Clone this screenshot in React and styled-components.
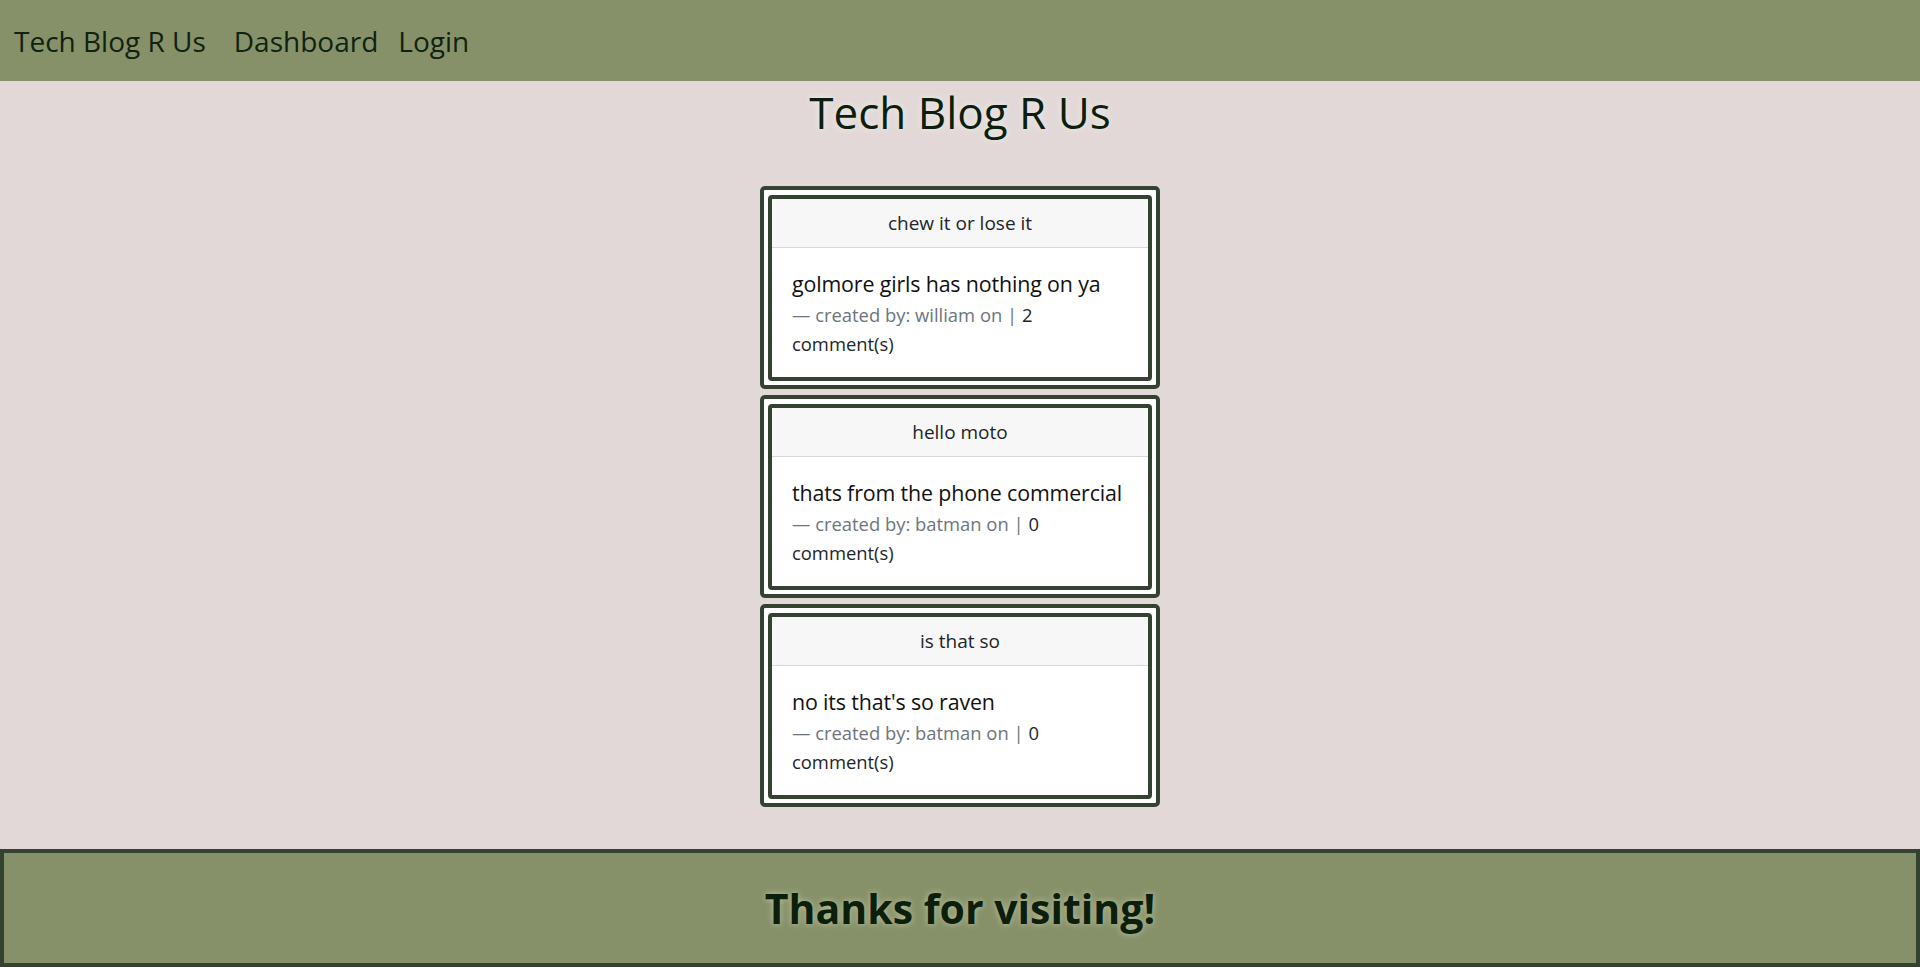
import styled, { createGlobalStyle } from "styled-components";

const GlobalStyle = createGlobalStyle`
  * { box-sizing: border-box; }
  html, body { margin: 0; padding: 0; }
  body {
    background: #e2d8d8;
    font-family: "Open Sans", "Noto Sans", sans-serif;
    color: #212529;
  }
`;

const Page = styled.div`
  min-height: 100vh;
  display: flex;
  flex-direction: column;
`;

const Nav = styled.nav`
  height: 81px;
  background: #86916a;
  display: flex;
  align-items: center;
  padding-left: 14px;
`;

const NavLink = styled.a`
  font-size: 28px;
  color: #0f2310;
  text-decoration: none;
  margin-right: ${({ $gap }) => $gap}px;
  line-height: 1;
`;

const Main = styled.main`
  flex: 1;
  display: flex;
  flex-direction: column;
  align-items: center;
`;

const Title = styled.h1`
  margin: 5px 0 48px;
  font-size: 44px;
  line-height: 52px;
  font-weight: 500;
  color: #0c1f0c;
  text-shadow: 0 0 6px rgba(255, 255, 255, 0.6);
`;

const PostList = styled.div`
  display: flex;
  flex-direction: column;
  gap: 6px;
`;

const PostFrame = styled.div`
  width: 400px;
  background: #fff;
  border: 4px solid #344331;
  border-radius: 5px;
  padding: 5px 4px 4px;
`;

const Card = styled.div`
  border: 4px solid #344331;
  border-radius: 4px;
  background: #fff;
  overflow: hidden;
`;

const CardHeader = styled.div`
  height: 49px;
  background: #f7f7f7;
  border-bottom: 1px solid rgba(0, 0, 0, 0.125);
  display: flex;
  align-items: center;
  justify-content: center;
  font-size: 19px;
  color: #212529;
`;

const CardBody = styled.div`
  padding: 20px 20px 19px;
`;

const PostText = styled.p`
  margin: 0;
  font-size: 21.4px;
  line-height: 32px;
  letter-spacing: -0.15px;
  white-space: nowrap;
  color: #111;
`;

const Meta = styled.div`
  font-size: 18.4px;
  line-height: 29px;
  color: #212529;
`;

const Muted = styled.span`
  color: #6c757d;
`;

const Footer = styled.footer`
  height: 118px;
  background: #86916a;
  border: 4px solid #344331;
  display: flex;
  align-items: center;
  justify-content: center;
`;

const FooterText = styled.h2`
  margin: 0;
  font-size: 41px;
  font-weight: 700;
  color: #0c1f0c;
  text-shadow: 0 0 6px #bfc49e;
`;

const posts = [
  { title: "chew it or lose it", text: "golmore girls has nothing on ya", user: "william", count: 2 },
  { title: "hello moto", text: "thats from the phone commercial", user: "batman", count: 0 },
  { title: "is that so", text: "no its that's so raven", user: "batman", count: 0 },
];

export default function App() {
  return (
    <Page>
      <GlobalStyle />
      <Nav>
        <NavLink href="#" $gap={28}>Tech Blog R Us</NavLink>
        <NavLink href="#" $gap={20}>Dashboard</NavLink>
        <NavLink href="#" $gap={0}>Login</NavLink>
      </Nav>
      <Main>
        <Title>Tech Blog R Us</Title>
        <PostList>
          {posts.map((p) => (
            <PostFrame key={p.title}>
              <Card>
                <CardHeader>{p.title}</CardHeader>
                <CardBody>
                  <PostText>{p.text}</PostText>
                  <Meta>
                    <Muted>— created by: {p.user} on |</Muted> {p.count}
                    <br />
                    comment(s)
                  </Meta>
                </CardBody>
              </Card>
            </PostFrame>
          ))}
        </PostList>
      </Main>
      <Footer>
        <FooterText>Thanks for visiting!</FooterText>
      </Footer>
    </Page>
  );
}
